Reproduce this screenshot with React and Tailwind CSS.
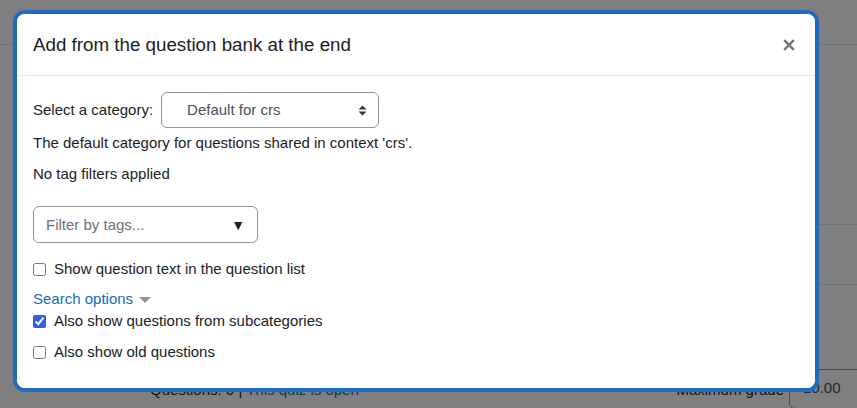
import { useState } from "react";

const font = { fontFamily: '"Liberation Sans", Arial, sans-serif' };

const Checkbox = ({ checked, onChange, label }) => (
  <label className="flex items-center h-[22px] text-[15px] text-[#1d2125]">
    <input
      type="checkbox"
      checked={checked}
      onChange={onChange}
      className="w-[13px] h-[13px] m-0 mr-[8px] accent-[#2f5fe8]"
    />
    <span>{label}</span>
  </label>
);

const App = () => {
  const [showText, setShowText] = useState(false);
  const [subcats, setSubcats] = useState(true);
  const [oldQ, setOldQ] = useState(false);

  return (
    <div className="relative w-full h-[408px] bg-white overflow-hidden" style={font}>
      {/* page behind the dialog */}
      <div className="h-[45px] border-b border-[#dee2e6]" />
      <div className="ml-[150px]">
        <div className="h-[180px] border-b border-[#dee2e6]" />
        <div className="h-[60px] border-b border-[#dee2e6]" />
        <div className="flex items-start justify-between mt-[84px] mr-[-12px]">
          <div className="text-[15px] mt-[10px]">
            <span className="text-[#1d2125]">Questions: 0 | </span>
            <span className="text-[#0f6cbf]">This quiz is open</span>
          </div>
          <div className="flex items-start">
            <span className="text-[15px] text-[#1d2125] mt-[10px] mr-[5px]">Maximum grade</span>
            <div className="w-[80px] h-[40px] border border-[#8f959e] rounded-[6px] pl-[13px] pt-[7px] text-[15px] text-[#495057]">
              10.00
            </div>
          </div>
        </div>
      </div>

      {/* backdrop */}
      <div className="absolute inset-0 bg-black/50" />

      {/* dialog */}
      <div className="absolute left-[13px] top-[10px] w-[806px] h-[382px] rounded-[12px] border-4 border-[#1c6dc0] bg-white">
        <div className="h-full rounded-[8px] bg-white overflow-hidden">
          <div className="flex items-center justify-between h-[62px] px-[16px] border-b border-[#dee2e6]">
            <h5 className="text-[18.75px] leading-[28px] text-[#1d2125]">
              Add from the question bank at the end
            </h5>
            <button className="w-[14px] h-[14px] mr-[3px] flex items-center justify-center">
              <svg width="12" height="12" viewBox="0 0 12 12">
                <path d="M1.2 1.2 L10.8 10.8 M10.8 1.2 L1.2 10.8" stroke="#6f777f" strokeWidth="2.4" strokeLinecap="butt" />
              </svg>
            </button>
          </div>

          <div className="px-[16px] pt-[16px] text-[15px] leading-[22px] text-[#1d2125]">
            <div className="flex items-center">
              <label className="mr-[8px]">Select a category:</label>
              <div className="relative w-[218px] h-[36px] border border-[#8f959e] rounded-[6px] flex items-center pl-[25px] text-[#495057]">
                Default for crs
                <svg className="absolute right-[11px] top-[12px]" width="9" height="11" viewBox="0 0 9 11">
                  <path d="M4.5 0.5 L8.5 4.5 L0.5 4.5 Z M4.5 10.5 L8.5 6.5 L0.5 6.5 Z" fill="#343a40" />
                </svg>
              </div>
            </div>
            <p className="mt-[4px]">The default category for questions shared in context 'crs'.</p>
            <p className="mt-[9px]">No tag filters applied</p>

            <div className="mt-[21px] w-[225px] h-[37px] border border-[#8f959e] rounded-[6px] flex items-center justify-between pl-[12px] pr-[12px]">
              <span className="text-[#6a737b]">Filter by tags...</span>
              <span className="text-[14px] text-[#1d2125]">▼</span>
            </div>

            <div className="mt-[15px]">
              <Checkbox checked={showText} onChange={() => setShowText(!showText)} label="Show question text in the question list" />
            </div>

            <div className="mt-[8px] flex items-center">
              <a href="#" className="text-[#0f6cbf]">Search options</a>
              <svg className="ml-[6px] mt-[2px]" width="12" height="6" viewBox="0 0 12 6">
                <path d="M0 0 L12 0 L6 6 Z" fill="#8f959e" />
              </svg>
            </div>
            <Checkbox checked={subcats} onChange={() => setSubcats(!subcats)} label="Also show questions from subcategories" />
            <div className="mt-[9px]">
              <Checkbox checked={oldQ} onChange={() => setOldQ(!oldQ)} label="Also show old questions" />
            </div>
          </div>
        </div>
      </div>
    </div>
  );
};

export default App;
